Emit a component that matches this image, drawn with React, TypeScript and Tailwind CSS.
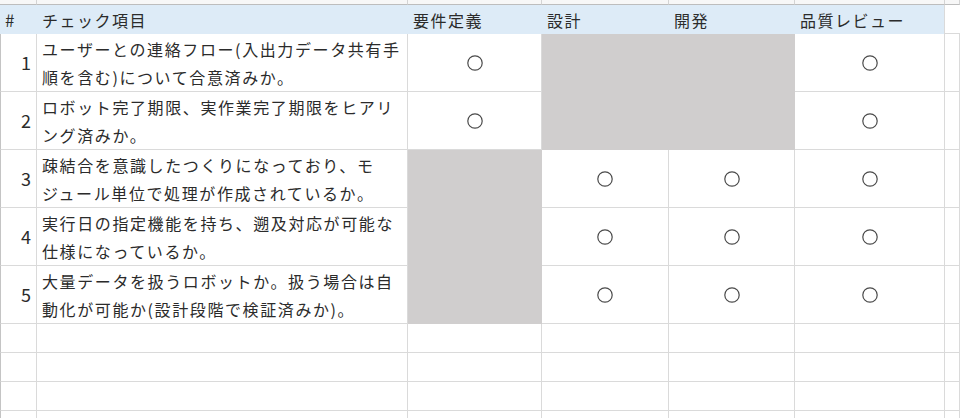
import React from 'react';

// Checklist rows: two display lines each, as wrapped in the sheet
interface CheckRow {
  no: number;
  lines: [string, string];
}

const rows: CheckRow[] = [
  { no: 1, lines: ['ユーザーとの連絡フロー(入出力データ共有手', '順を含む)について合意済みか。'] },
  { no: 2, lines: ['ロボット完了期限、実作業完了期限をヒアリ', 'ング済みか。'] },
  { no: 3, lines: ['疎結合を意識したつくりになっており、モ', 'ジュール単位で処理が作成されているか。'] },
  { no: 4, lines: ['実行日の指定機能を持ち、遡及対応が可能な', '仕様になっているか。'] },
  { no: 5, lines: ['大量データを扱うロボットか。扱う場合は自', '動化が可能か(設計段階で検証済みか)。'] },
];

const line = 'border-r border-b border-[#dadada]';

const Mark = () => (
  <div className={`${line} flex items-center justify-center`}>
    <svg width="16" height="16" viewBox="0 0 16 16">
      <circle cx="8" cy="8" r="7.2" fill="none" stroke="#4a4a4a" strokeWidth="1.2" />
    </svg>
  </div>
);

const Blank = () => <div className={line} />;

export default function App() {
  const headers = ['#', 'チェック項目', '要件定義', '設計', '開発', '品質レビュー'];

  return (
    <div className="w-[960px] h-[418px] overflow-hidden bg-white text-[#2b2b2b] font-['Noto_Sans_CJK_JP','Noto_Sans',sans-serif]">
      <div className="grid grid-cols-[37px_371px_134px_127px_126px_150px_1fr] grid-rows-[5px_29px_repeat(5,58px)_repeat(4,29px)]">
        {/* top strip (previous row edge) */}
        {Array.from({ length: 7 }).map((_, i) => (
          <div key={`t${i}`} className="border-r border-[#d4d4d4] border-b border-b-[#bdbdbd] bg-[#f7f7f7]" />
        ))}

        {/* header */}
        {headers.map((h, i) => (
          <div
            key={h}
            className={`bg-[#ddebf7] flex items-center pl-[5px] whitespace-nowrap ${
              i === 0 ? 'text-[17px]' : 'text-[16px] tracking-[1.5px]'
            } ${i === 5 ? 'border-r border-[#dadada]' : ''}`}
          >
            {h}
          </div>
        ))}
        <div className="border-b border-[#dadada]" />

        {/* body */}
        {rows.map((r) => (
          <React.Fragment key={r.no}>
            <div className={`${line} border-l border-l-[#c4c4c4] flex items-center justify-end pr-[5px] text-[18px]`}>
              {r.no}
            </div>
            <div className={`${line} flex flex-col justify-center pl-[5px] text-[16px] leading-[28px] tracking-[1.6px] whitespace-nowrap`}>
              <span>{r.lines[0]}</span>
              <span>{r.lines[1]}</span>
            </div>
            {r.no === 1 && (
              <>
                <Mark />
                <div className="col-span-2 row-span-2 bg-[#d0cece] border-r border-b border-[#d0cece]" />
                <Mark />
              </>
            )}
            {r.no === 2 && (
              <>
                <Mark />
                <Mark />
              </>
            )}
            {r.no === 3 && (
              <>
                <div className="row-span-3 bg-[#d0cece] border-r border-b border-[#d0cece]" />
                <Mark />
                <Mark />
                <Mark />
              </>
            )}
            {r.no > 3 && (
              <>
                <Mark />
                <Mark />
                <Mark />
              </>
            )}
            <Blank />
          </React.Fragment>
        ))}

        {/* empty rows */}
        {Array.from({ length: 4 }).map((_, ri) => (
          <React.Fragment key={`e${ri}`}>
            <div className={`${line} border-l border-l-[#c4c4c4]`} />
            {Array.from({ length: 6 }).map((_, ci) => (
              <Blank key={ci} />
            ))}
          </React.Fragment>
        ))}
      </div>
    </div>
  );
}
